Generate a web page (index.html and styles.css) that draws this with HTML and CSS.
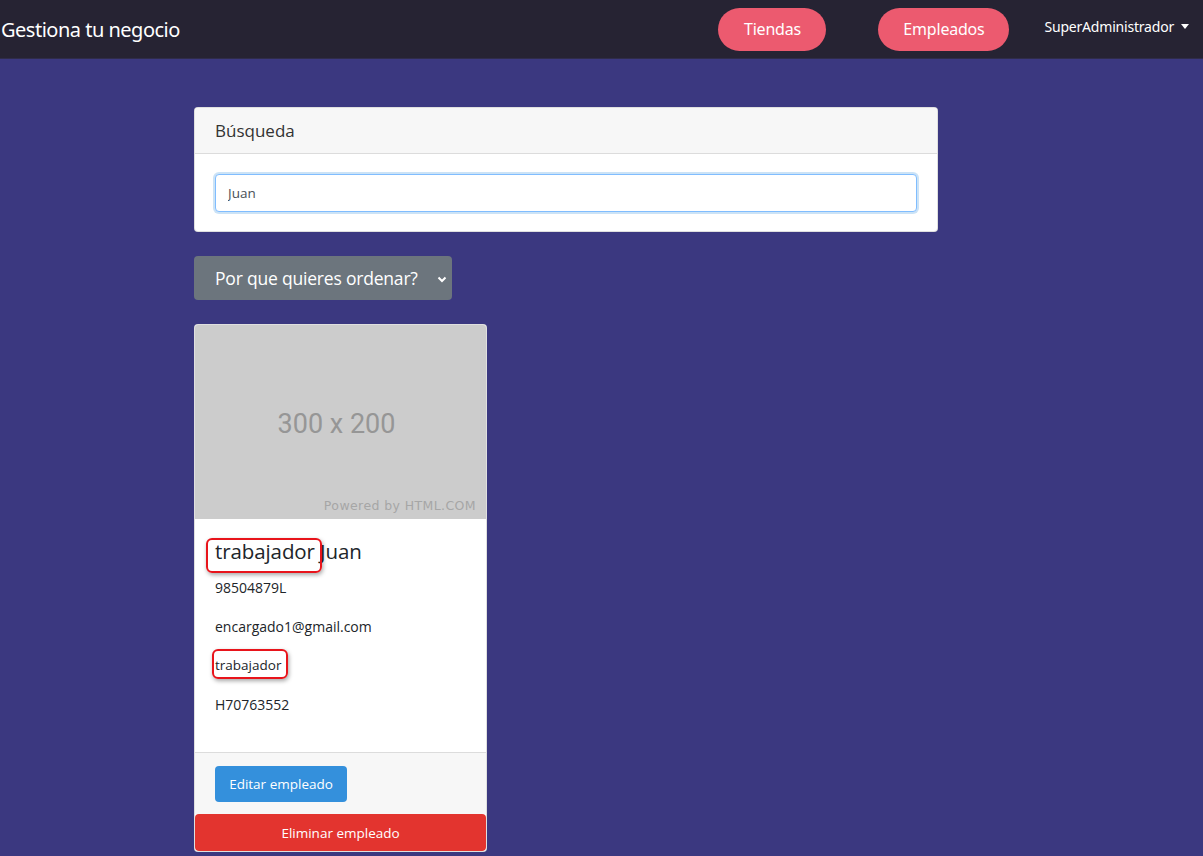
FILE: index.html
```html
<!DOCTYPE html>
<html lang="es">
<head>
<meta charset="utf-8">
<title>Gestiona tu negocio</title>
<link rel="stylesheet" href="styles.css">
</head>
<body>
<nav class="navbar">
  <a class="brand" href="#">Gestiona tu negocio</a>
  <div class="nav-right">
    <a class="pill" href="#">Tiendas</a>
    <a class="pill pill-wide" href="#">Empleados</a>
    <a class="user" href="#">SuperAdministrador <span class="caret"></span></a>
  </div>
</nav>
<main class="main">
  <div class="container">
    <section class="card search-card">
      <div class="card-header">Búsqueda</div>
      <div class="card-body">
        <input class="input" type="text" value="Juan">
      </div>
    </section>
    <div class="select">
      <span>Por que quieres ordenar?</span>
      <svg class="chev" width="10" height="7" viewBox="0 0 10 7"><path d="M1.5 1.5 L5 5 L8.5 1.5" fill="none" stroke="#fff" stroke-width="2"/></svg>
    </div>
    <article class="card emp-card">
      <div class="placeholder">
        <span class="ph-size">300 x 200</span>
        <span class="ph-powered">Powered by HTML.COM</span>
      </div>
      <div class="emp-body">
        <h5 class="emp-title">trabajador Juan</h5>
        <p class="line">98504879L</p>
        <p class="line">encargado1@gmail.com</p>
        <p class="line small">trabajador</p>
        <p class="line">H70763552</p>
        <span class="mark mark-1"></span>
        <span class="mark mark-2"></span>
      </div>
      <div class="emp-footer">
        <a class="btn btn-blue" href="#">Editar empleado</a>
      </div>
      <a class="btn-delete" href="#">Eliminar empleado</a>
    </article>
  </div>
</main>
</body>
</html>
```

FILE: styles.css
```css
* { box-sizing: border-box; }
html, body { margin: 0; padding: 0; }
body {
  background: #3b3880;
  font-family: "Open Sans", "Noto Sans", sans-serif;
  color: #212529;
  height: 856px;
  overflow: hidden;
}
a { text-decoration: none; }

.navbar {
  height: 59px;
  background: #262333;
  display: flex;
  align-items: center;
  justify-content: space-between;
  border-bottom: 1px solid #2f2c4a;
}
.brand {
  color: #fff;
  font-family: "Noto Sans", sans-serif;
  font-size: 20px;
  letter-spacing: -0.5px;
  padding-left: 1px;
  margin-top: 1px;
}
.nav-right {
  display: flex;
  align-items: center;
  height: 100%;
}
.pill {
  background: #ec5a6f;
  color: #fff;
  font-family: "Noto Sans", sans-serif;
  font-size: 16px;
  letter-spacing: -0.2px;
  height: 43px;
  width: 108px;
  border-radius: 22px;
  display: flex;
  align-items: center;
  justify-content: center;
  margin-right: 52px;
}
.pill-wide { width: 131px; margin-right: 35px; }
.user {
  color: #fff;
  font-family: "Noto Sans", sans-serif;
  font-size: 14px;
  letter-spacing: -0.2px;
  display: flex;
  align-items: center;
  margin-top: -5px;
  margin-right: 14px;
}
.caret {
  display: inline-block;
  margin-left: 7px;
  border-left: 4.5px solid transparent;
  border-right: 4.5px solid transparent;
  border-top: 5px solid #fff;
}

.main { padding: 48px 0 0 194px; }
.container { width: 744px; }

.card {
  background: #fff;
  border: 1px solid rgba(0,0,0,.125);
  border-radius: 4px;
  overflow: hidden;
}
.search-card { margin-bottom: 24px; }
.card-header {
  background: #f7f7f7;
  border-bottom: 1px solid #dcdcdc;
  height: 46px;
  padding: 0 20px;
  display: flex;
  align-items: center;
  font-size: 17px;
  color: #333;
}
.card-body { padding: 20px 20px 19px; }
.input {
  display: block;
  width: 100%;
  height: 38px;
  border: 1px solid #80bdff;
  border-radius: 4px;
  box-shadow: 0 0 0 2px rgba(52,144,220,.25);
  padding: 0 12px;
  font-family: inherit;
  font-size: 13.5px;
  color: #495057;
  outline: none;
}

.select {
  width: 258px;
  height: 44px;
  background: #6c757d;
  border-radius: 4px;
  color: #fff;
  font-size: 17.5px;
  letter-spacing: -0.2px;
  display: flex;
  align-items: center;
  justify-content: space-between;
  padding: 0 5px 0 21px;
  margin-bottom: 24px;
}
.chev { margin-top: 2px; }

.emp-card {
  width: 293px;
  display: flex;
  flex-direction: column;
}
.placeholder {
  height: 194px;
  background: #cccccc;
  position: relative;
  display: flex;
  align-items: center;
  justify-content: center;
}
.ph-size {
  font-family: "Roboto", "Liberation Sans", sans-serif;
  font-size: 27px;
  color: #969696;
  margin-right: 8px;
  margin-top: 3px;
}
.ph-powered {
  position: absolute;
  right: 10px;
  bottom: 6px;
  font-family: "DejaVu Sans", sans-serif;
  font-size: 12.5px;
  letter-spacing: 0.4px;
  color: #a6a6a6;
}
.emp-body {
  position: relative;
  padding: 20px 20px 37px;
  border-bottom: 1px solid #dcdcdc;
}
.emp-title {
  margin: 0 0 14px;
  font-size: 20.5px;
  font-weight: 400;
  line-height: 24px;
  letter-spacing: -0.1px;
}
.line {
  margin: 0 0 18px;
  font-size: 14px;
  line-height: 21px;
}
.line:last-of-type { margin-bottom: 0; }
.line.small { font-size: 13.5px; }
.mark {
  position: absolute;
  border: 2px solid #e8141b;
  border-radius: 6px;
  box-shadow: 1px 2px 4px rgba(0,0,0,.35);
}
.mark-1 { left: 11px; top: 19px; width: 116px; height: 35px; }
.mark-2 { left: 17px; top: 130px; width: 76px; height: 30px; }

.emp-footer {
  background: #f7f7f7;
  padding: 13px 20px 12px;
}
.btn-blue {
  display: inline-flex;
  align-items: center;
  justify-content: center;
  width: 132px;
  height: 36px;
  background: #3490dc;
  border-radius: 4px;
  color: #fff;
  font-size: 13.5px;
}
.btn-delete {
  display: flex;
  align-items: center;
  justify-content: center;
  height: 37px;
  background: #e3342f;
  color: #fff;
  font-size: 13.5px;
  border-radius: 4px;
}
```
